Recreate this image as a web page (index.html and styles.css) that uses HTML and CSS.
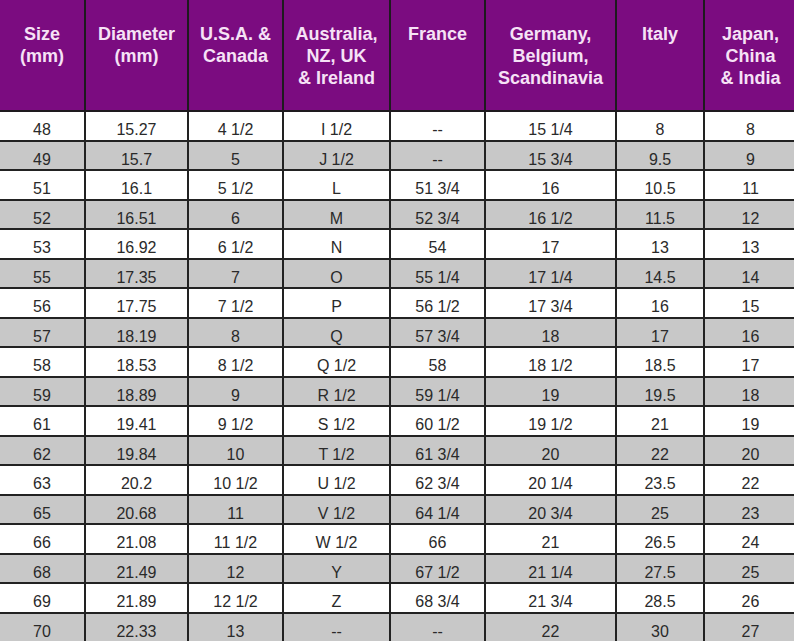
FILE: index.html
```html
<!DOCTYPE html>
<html>
<head>
<meta charset="utf-8">
<link rel="stylesheet" href="styles.css">
</head>
<body>
<div class="chart">
  <div class="hd">Size<br>(mm)</div>
  <div class="hd">Diameter<br>(mm)</div>
  <div class="hd">U.S.A. &amp;<br>Canada</div>
  <div class="hd">Australia,<br>NZ, UK<br>&amp; Ireland</div>
  <div class="hd">France</div>
  <div class="hd">Germany,<br>Belgium,<br>Scandinavia</div>
  <div class="hd">Italy</div>
  <div class="hd">Japan,<br>China<br>&amp; India</div>

  <div class="c">48</div><div class="c">15.27</div><div class="c">4 1/2</div><div class="c">I 1/2</div><div class="c">--</div><div class="c">15 1/4</div><div class="c">8</div><div class="c">8</div>
  <div class="c g">49</div><div class="c g">15.7</div><div class="c g">5</div><div class="c g">J 1/2</div><div class="c g">--</div><div class="c g">15 3/4</div><div class="c g">9.5</div><div class="c g">9</div>
  <div class="c">51</div><div class="c">16.1</div><div class="c">5 1/2</div><div class="c">L</div><div class="c">51 3/4</div><div class="c">16</div><div class="c">10.5</div><div class="c">11</div>
  <div class="c g">52</div><div class="c g">16.51</div><div class="c g">6</div><div class="c g">M</div><div class="c g">52 3/4</div><div class="c g">16 1/2</div><div class="c g">11.5</div><div class="c g">12</div>
  <div class="c">53</div><div class="c">16.92</div><div class="c">6 1/2</div><div class="c">N</div><div class="c">54</div><div class="c">17</div><div class="c">13</div><div class="c">13</div>
  <div class="c g">55</div><div class="c g">17.35</div><div class="c g">7</div><div class="c g">O</div><div class="c g">55 1/4</div><div class="c g">17 1/4</div><div class="c g">14.5</div><div class="c g">14</div>
  <div class="c">56</div><div class="c">17.75</div><div class="c">7 1/2</div><div class="c">P</div><div class="c">56 1/2</div><div class="c">17 3/4</div><div class="c">16</div><div class="c">15</div>
  <div class="c g">57</div><div class="c g">18.19</div><div class="c g">8</div><div class="c g">Q</div><div class="c g">57 3/4</div><div class="c g">18</div><div class="c g">17</div><div class="c g">16</div>
  <div class="c">58</div><div class="c">18.53</div><div class="c">8 1/2</div><div class="c">Q 1/2</div><div class="c">58</div><div class="c">18 1/2</div><div class="c">18.5</div><div class="c">17</div>
  <div class="c g">59</div><div class="c g">18.89</div><div class="c g">9</div><div class="c g">R 1/2</div><div class="c g">59 1/4</div><div class="c g">19</div><div class="c g">19.5</div><div class="c g">18</div>
  <div class="c">61</div><div class="c">19.41</div><div class="c">9 1/2</div><div class="c">S 1/2</div><div class="c">60 1/2</div><div class="c">19 1/2</div><div class="c">21</div><div class="c">19</div>
  <div class="c g">62</div><div class="c g">19.84</div><div class="c g">10</div><div class="c g">T 1/2</div><div class="c g">61 3/4</div><div class="c g">20</div><div class="c g">22</div><div class="c g">20</div>
  <div class="c">63</div><div class="c">20.2</div><div class="c">10 1/2</div><div class="c">U 1/2</div><div class="c">62 3/4</div><div class="c">20 1/4</div><div class="c">23.5</div><div class="c">22</div>
  <div class="c g">65</div><div class="c g">20.68</div><div class="c g">11</div><div class="c g">V 1/2</div><div class="c g">64 1/4</div><div class="c g">20 3/4</div><div class="c g">25</div><div class="c g">23</div>
  <div class="c">66</div><div class="c">21.08</div><div class="c">11 1/2</div><div class="c">W 1/2</div><div class="c">66</div><div class="c">21</div><div class="c">26.5</div><div class="c">24</div>
  <div class="c g">68</div><div class="c g">21.49</div><div class="c g">12</div><div class="c g">Y</div><div class="c g">67 1/2</div><div class="c g">21 1/4</div><div class="c g">27.5</div><div class="c g">25</div>
  <div class="c">69</div><div class="c">21.89</div><div class="c">12 1/2</div><div class="c">Z</div><div class="c">68 3/4</div><div class="c">21 3/4</div><div class="c">28.5</div><div class="c">26</div>
  <div class="c g">70</div><div class="c g">22.33</div><div class="c g">13</div><div class="c g">--</div><div class="c g">--</div><div class="c g">22</div><div class="c g">30</div><div class="c g">27</div>
</div>
</body>
</html>
```

FILE: styles.css
```css
html, body {
  margin: 0;
  padding: 0;
  background: #ffffff;
  overflow: hidden;
}

.chart {
  display: grid;
  grid-template-columns: 86px 103px 95px 107px 95px 131px 88px 93px;
  grid-template-rows: 112px;
  grid-auto-rows: 29.5px;
  font-family: "Liberation Sans", Arial, sans-serif;
  width: 798px;
}

.hd {
  background: #7b0c80;
  color: #f6e2f6;
  font-weight: bold;
  font-size: 18px;
  line-height: 22px;
  text-align: center;
  padding-top: 23px;
  border-right: 2px solid #1e1a1e;
  border-bottom: 2px solid #1e1a1e;
  box-sizing: border-box;
}

.c {
  background: #ffffff;
  color: #2a2a2a;
  font-size: 16px;
  line-height: 18px;
  text-align: center;
  padding-top: 9px;
  border-right: 2px solid #222222;
  border-bottom: 2px solid #222222;
  box-sizing: border-box;
  overflow: hidden;
}

.c.g {
  background: #c8c8c8;
}
```
